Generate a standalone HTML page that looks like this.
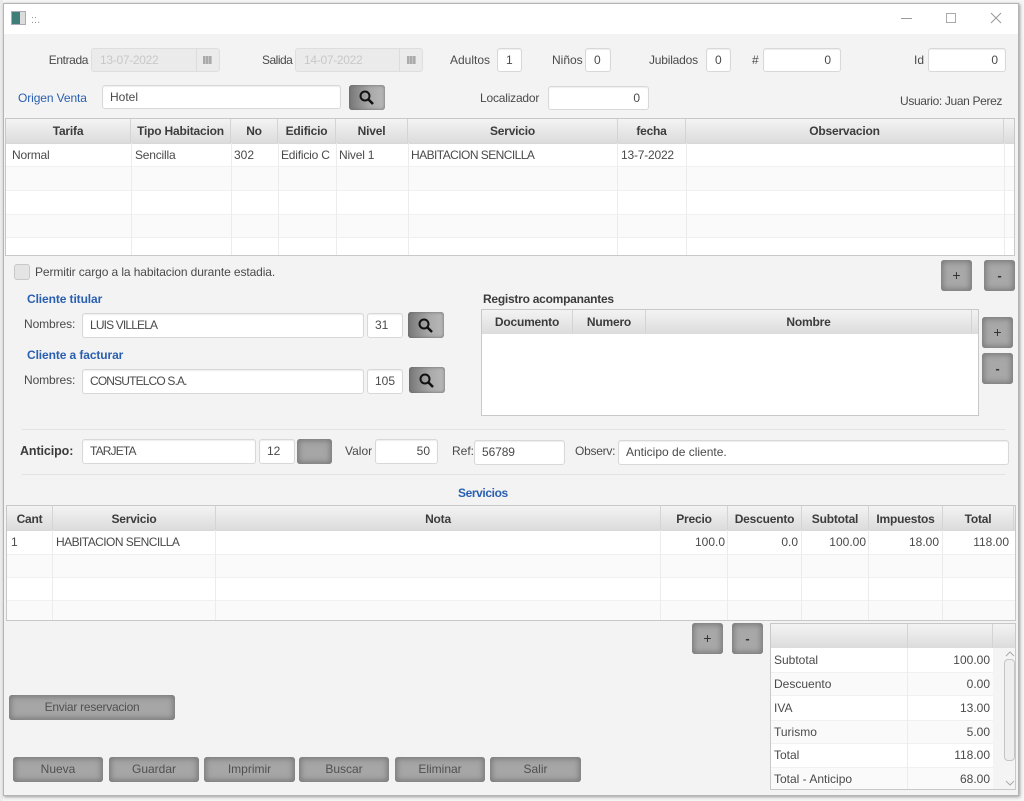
<!DOCTYPE html>
<html><head><meta charset="utf-8"><style>
html,body{margin:0;padding:0}
body{width:1024px;height:801px;position:relative;overflow:hidden;background:#f6f6f6;font:12px "Liberation Sans",sans-serif;color:#4a4a4a}
#w{position:absolute;left:0;top:0;width:1024px;height:801px;filter:blur(.35px)}
div{position:absolute;box-sizing:border-box}
.t{white-space:nowrap;line-height:16px;height:16px}
.r{text-align:right}.c{text-align:center}
.f{background:#fff;border:1px solid #d8d8d8;border-radius:3px;box-shadow:inset 0 1px 1px #eee;line-height:22px;padding:0 7px;white-space:nowrap;color:#4a4a4a}
.d{background:#ebebeb;border:1px solid #dedede;border-radius:3px;color:#c8c8c8;line-height:22px;padding:0 8px;white-space:nowrap}
.b{background:#a6a6a6;border-radius:3px;box-shadow:inset 0 0 6px 2px #7a7a7a;text-align:center;color:#505050;line-height:25px;white-space:nowrap}
.p{background:#a8a8a8;line-height:31px;color:#333;font-size:14px}
.pm{font-weight:bold;font-size:13px}
.m{background:linear-gradient(90deg,#777,#aaa 60%,#b8b8b8);box-shadow:inset 0 0 3px #666}
.h{background:linear-gradient(#f3f3f3,#dcdcdc);font-weight:bold;text-align:center;line-height:24px;color:#3c3c3c;white-space:nowrap;border-right:1px solid #d4d4d4;top:0;height:24px;letter-spacing:-.2px}
.h2{line-height:26px}
.v{width:1px;background:#ececec}
.row{left:0;right:0;background:#fafafa;border-top:1px solid #f0f0f0;border-bottom:1px solid #f0f0f0}
.tb{background:#fff;border:1px solid #c8c8c8;overflow:hidden}
.bl{color:#2a5fb0}
.bb{font-weight:bold;letter-spacing:-.1px}
.cell{white-space:nowrap;line-height:16px;height:16px}
.s{background:#e2e2e2;height:1px}
.ca{letter-spacing:-.55px}
.cf{letter-spacing:-.85px}
svg{position:absolute}
</style></head><body><div id="w">
<div style="left:0;top:0;width:3px;height:801px;background:#ececec"></div>
<div style="left:3px;top:3px;width:1016px;height:793px;background:#f3f3f3;border:1px solid #b4b4b4;box-shadow:1px 1px 3px #999"></div>
<div style="left:4px;top:4px;width:1014px;height:30px;background:#fff"></div>

<div style="left:11px;top:11px;width:15px;height:14px;background:linear-gradient(90deg,#3f7f78 0,#3f7f78 60%,#dcdcdc 60%);border:1px solid #aab"></div>
<div class="t" style="left:31px;top:12px;color:#999;font-size:11px">::.</div>
<div style="left:901px;top:18px;width:11px;height:1px;background:#999"></div>
<div style="left:946px;top:13px;width:10px;height:10px;border:1px solid #aaa"></div>
<svg style="left:990px;top:12px" width="12" height="12"><path d="M1 1L11 11M11 1L1 11" stroke="#999" fill="none"/></svg>

<div class="t r" style="left:30px;top:52px;width:58px;letter-spacing:-.4px">Entrada</div>
<div class="d" style="left:91px;top:48px;width:129px;height:24px;letter-spacing:-.3px">13-07-2022</div>
<div style="left:196px;top:48px;width:1px;height:24px;background:#dcdcdc"></div>
<div style="left:203px;top:56px;width:9px;height:8px;background:repeating-linear-gradient(90deg,#aaa 0 2px,#c4c4c4 2px 3px)"></div>
<div class="t" style="left:262px;top:52px;letter-spacing:-.5px">Salida</div>
<div class="d" style="left:295px;top:48px;width:128px;height:24px;letter-spacing:-.3px">14-07-2022</div>
<div style="left:399px;top:48px;width:1px;height:24px;background:#dcdcdc"></div>
<div style="left:407px;top:56px;width:9px;height:8px;background:repeating-linear-gradient(90deg,#aaa 0 2px,#c4c4c4 2px 3px)"></div>
<div class="t" style="left:450px;top:52px">Adultos</div>
<div class="f" style="left:497px;top:48px;width:25px;height:24px;padding:0 8px">1</div>
<div class="t" style="left:552px;top:52px">Niños</div>
<div class="f" style="left:585px;top:48px;width:26px;height:24px;padding:0 8px">0</div>
<div class="t" style="left:649px;top:52px;letter-spacing:-.2px">Jubilados</div>
<div class="f" style="left:706px;top:48px;width:25px;height:24px;padding:0 8px">0</div>
<div class="t" style="left:752px;top:52px">#</div>
<div class="f r" style="left:763px;top:48px;width:78px;height:24px;padding:0 9px">0</div>
<div class="t" style="left:914px;top:52px">Id</div>
<div class="f r" style="left:928px;top:48px;width:78px;height:24px;padding:0 7px">0</div>

<div class="t bl" style="left:18px;top:90px;letter-spacing:-.1px">Origen Venta</div>
<div class="f" style="left:102px;top:85px;width:239px;height:24px">Hotel</div>
<div class="b m" style="left:349px;top:85px;width:36px;height:25px"></div>
<svg style="left:349px;top:85px" width="36" height="25"><circle cx="16" cy="11" r="4.5" fill="none" stroke="#111" stroke-width="2"/><path d="M19.5 14.5L24 19" stroke="#111" stroke-width="2.5"/></svg>
<div class="t" style="left:480px;top:90px;letter-spacing:-.2px">Localizador</div>
<div class="f r" style="left:548px;top:86px;width:101px;height:24px;padding:0 8px">0</div>
<div class="t" style="left:900px;top:93px;letter-spacing:-.35px">Usuario: Juan Perez</div>

<div class="tb" style="left:5px;top:118px;width:1010px;height:138px">
<div class="h" style="left:0;width:125px">Tarifa</div>
<div class="h" style="left:125px;width:100px">Tipo Habitacion</div>
<div class="h" style="left:225px;width:47px">No</div>
<div class="h" style="left:272px;width:58px">Edificio</div>
<div class="h" style="left:330px;width:72px">Nivel</div>
<div class="h" style="left:402px;width:210px">Servicio</div>
<div class="h" style="left:612px;width:68px">fecha</div>
<div class="h" style="left:680px;width:318px">Observacion</div>
<div class="h" style="left:998px;width:10px;border:0"></div>
<div style="left:0;top:24px;width:1010px;height:1px;background:#d8d8d8"></div>
<div class="row" style="top:47px;height:25px"></div>
<div class="row" style="top:95px;height:24px"></div>
<div class="v" style="left:125px;top:24px;height:112px"></div>
<div class="v" style="left:225px;top:24px;height:112px"></div>
<div class="v" style="left:272px;top:24px;height:112px"></div>
<div class="v" style="left:330px;top:24px;height:112px"></div>
<div class="v" style="left:402px;top:24px;height:112px"></div>
<div class="v" style="left:611px;top:24px;height:112px"></div>
<div class="v" style="left:680px;top:24px;height:112px"></div>
<div class="v" style="left:998px;top:24px;height:112px"></div>
<div class="cell" style="left:6px;top:28px;letter-spacing:-.2px">Normal</div>
<div class="cell" style="left:129px;top:28px;letter-spacing:-.2px">Sencilla</div>
<div class="cell" style="left:228px;top:28px">302</div>
<div class="cell" style="left:275px;top:28px;letter-spacing:-.2px">Edificio C</div>
<div class="cell" style="left:333px;top:28px;letter-spacing:-.2px">Nivel 1</div>
<div class="cell ca" style="left:405px;top:28px">HABITACION SENCILLA</div>
<div class="cell" style="left:615px;top:28px;letter-spacing:-.2px">13-7-2022</div>
</div>

<div style="left:14px;top:264px;width:16px;height:16px;background:#e4e4e4;border:1px solid #c8c8c8;border-radius:3px"></div>
<div class="t" style="left:35px;top:264px;letter-spacing:-.1px">Permitir cargo a la habitacion durante estadia.</div>
<div class="b p" style="left:941px;top:260px;width:31px;height:31px">+</div>
<div class="b p pm" style="left:984px;top:260px;width:31px;height:31px">-</div>

<div class="t bl bb" style="left:27px;top:291px">Cliente titular</div>
<div class="t" style="left:24px;top:316px;letter-spacing:-.1px">Nombres:</div>
<div class="f cf" style="left:82px;top:313px;width:282px;height:25px">LUIS VILLELA</div>
<div class="f" style="left:367px;top:313px;width:36px;height:25px">31</div>
<div class="b m" style="left:408px;top:312px;width:36px;height:26px"></div>
<svg style="left:408px;top:312px" width="36" height="26"><circle cx="16" cy="12" r="4.5" fill="none" stroke="#111" stroke-width="2"/><path d="M19.5 15.5L24 20" stroke="#111" stroke-width="2.5"/></svg>
<div class="t bl bb" style="left:27px;top:347px">Cliente a facturar</div>
<div class="t" style="left:24px;top:372px;letter-spacing:-.1px">Nombres:</div>
<div class="f cf" style="left:82px;top:369px;width:282px;height:25px">CONSUTELCO S.A.</div>
<div class="f" style="left:367px;top:369px;width:36px;height:25px">105</div>
<div class="b m" style="left:409px;top:367px;width:36px;height:26px"></div>
<svg style="left:409px;top:367px" width="36" height="26"><circle cx="16" cy="12" r="4.5" fill="none" stroke="#111" stroke-width="2"/><path d="M19.5 15.5L24 20" stroke="#111" stroke-width="2.5"/></svg>

<div class="t bb" style="left:483px;top:291px;color:#3c3c3c;letter-spacing:-.25px">Registro acompanantes</div>
<div class="tb" style="left:481px;top:309px;width:498px;height:107px">
<div class="h" style="left:0;width:91px">Documento</div>
<div class="h" style="left:91px;width:73px">Numero</div>
<div class="h" style="left:164px;width:326px">Nombre</div>
<div class="h" style="left:490px;width:8px;border:0"></div>
</div>
<div class="b p" style="left:982px;top:317px;width:31px;height:31px">+</div>
<div class="b p pm" style="left:982px;top:353px;width:31px;height:31px">-</div>

<div class="s" style="left:22px;top:429px;width:983px"></div>
<div class="t bb" style="left:20px;top:443px;font-size:12.5px;color:#3c3c3c">Anticipo:</div>
<div class="f cf" style="left:82px;top:439px;width:174px;height:25px">TARJETA</div>
<div class="f" style="left:259px;top:439px;width:36px;height:25px">12</div>
<div class="b" style="left:297px;top:439px;width:35px;height:25px"></div>
<div class="t" style="left:345px;top:443px">Valor</div>
<div class="f r" style="left:375px;top:439px;width:63px;height:25px">50</div>
<div class="t" style="left:452px;top:443px">Ref:</div>
<div class="f" style="left:474px;top:440px;width:91px;height:25px;letter-spacing:-.1px">56789</div>
<div class="t" style="left:575px;top:443px;letter-spacing:-.25px">Observ:</div>
<div class="f" style="left:618px;top:440px;width:391px;height:25px">Anticipo de cliente.</div>
<div class="s" style="left:22px;top:474px;width:983px"></div>
<div class="t bl bb" style="left:458px;top:485px;letter-spacing:-.4px">Servicios</div>

<div class="tb" style="left:6px;top:505px;width:1010px;height:116px">
<div class="h h2" style="left:0;width:46px">Cant</div>
<div class="h h2" style="left:46px;width:163px">Servicio</div>
<div class="h h2" style="left:209px;width:445px">Nota</div>
<div class="h h2" style="left:654px;width:67px">Precio</div>
<div class="h h2" style="left:721px;width:74px">Descuento</div>
<div class="h h2" style="left:795px;width:67px">Subtotal</div>
<div class="h h2" style="left:862px;width:74px">Impuestos</div>
<div class="h h2" style="left:936px;width:71px">Total</div>
<div class="h" style="left:1007px;width:3px;border:0"></div>
<div style="left:0;top:24px;width:1010px;height:1px;background:#d8d8d8"></div>
<div class="row" style="top:48px;height:24px"></div>
<div class="row" style="top:94px;height:22px"></div>
<div class="v" style="left:45px;top:24px;height:92px"></div>
<div class="v" style="left:208px;top:24px;height:92px"></div>
<div class="v" style="left:653px;top:24px;height:92px"></div>
<div class="v" style="left:720px;top:24px;height:92px"></div>
<div class="v" style="left:794px;top:24px;height:92px"></div>
<div class="v" style="left:861px;top:24px;height:92px"></div>
<div class="v" style="left:935px;top:24px;height:92px"></div>
<div class="cell" style="left:4px;top:28px">1</div>
<div class="cell ca" style="left:49px;top:28px">HABITACION SENCILLA</div>
<div class="cell r" style="left:654px;width:64px;top:28px">100.0</div>
<div class="cell r" style="left:721px;width:70px;top:28px">0.0</div>
<div class="cell r" style="left:795px;width:64px;top:28px">100.00</div>
<div class="cell r" style="left:862px;width:70px;top:28px">18.00</div>
<div class="cell r" style="left:936px;width:66px;top:28px">118.00</div>
</div>

<div class="b p" style="left:692px;top:623px;width:31px;height:31px">+</div>
<div class="b p pm" style="left:732px;top:623px;width:31px;height:31px">-</div>

<div class="tb" style="left:770px;top:623px;width:246px;height:167px">
<div class="h" style="left:0;width:137px"></div>
<div class="h" style="left:137px;width:85px"></div>
<div class="h" style="left:222px;width:24px;border:0"></div>
<div class="row" style="top:48px;height:24px"></div>
<div class="row" style="top:96px;height:24px"></div>
<div class="row" style="top:143px;height:24px"></div>
<div class="v" style="left:136px;top:24px;height:143px"></div>
<div class="cell" style="left:3px;top:28px">Subtotal</div><div class="cell r" style="left:137px;width:82px;top:28px">100.00</div>
<div class="cell" style="left:3px;top:52px">Descuento</div><div class="cell r" style="left:137px;width:82px;top:52px">0.00</div>
<div class="cell" style="left:3px;top:76px">IVA</div><div class="cell r" style="left:137px;width:82px;top:76px">13.00</div>
<div class="cell" style="left:3px;top:100px">Turismo</div><div class="cell r" style="left:137px;width:82px;top:100px">5.00</div>
<div class="cell" style="left:3px;top:123px">Total</div><div class="cell r" style="left:137px;width:82px;top:123px">118.00</div>
<div class="cell" style="left:3px;top:147px">Total - Anticipo</div><div class="cell r" style="left:137px;width:82px;top:147px">68.00</div>
<div style="left:222px;top:24px;width:23px;height:143px;background:#f4f4f4"></div>
<div style="left:233px;top:35px;width:11px;height:102px;background:#eee;border:1px solid #c4c4c4;border-radius:4px"></div>
<svg style="left:233px;top:26px" width="12" height="8"><path d="M2 6L6 2L10 6" stroke="#aaa" fill="none"/></svg>
<svg style="left:233px;top:155px" width="12" height="8"><path d="M2 2L6 6L10 2" stroke="#aaa" fill="none"/></svg>
</div>

<div class="b" style="left:9px;top:695px;width:166px;height:25px;letter-spacing:-.25px">Enviar reservacion</div>
<div class="b" style="left:13px;top:757px;width:90px;height:25px">Nueva</div>
<div class="b" style="left:109px;top:757px;width:90px;height:25px">Guardar</div>
<div class="b" style="left:204px;top:757px;width:91px;height:25px">Imprimir</div>
<div class="b" style="left:299px;top:757px;width:90px;height:25px">Buscar</div>
<div class="b" style="left:395px;top:757px;width:90px;height:25px">Eliminar</div>
<div class="b" style="left:490px;top:757px;width:91px;height:25px">Salir</div>
</div></body></html>
